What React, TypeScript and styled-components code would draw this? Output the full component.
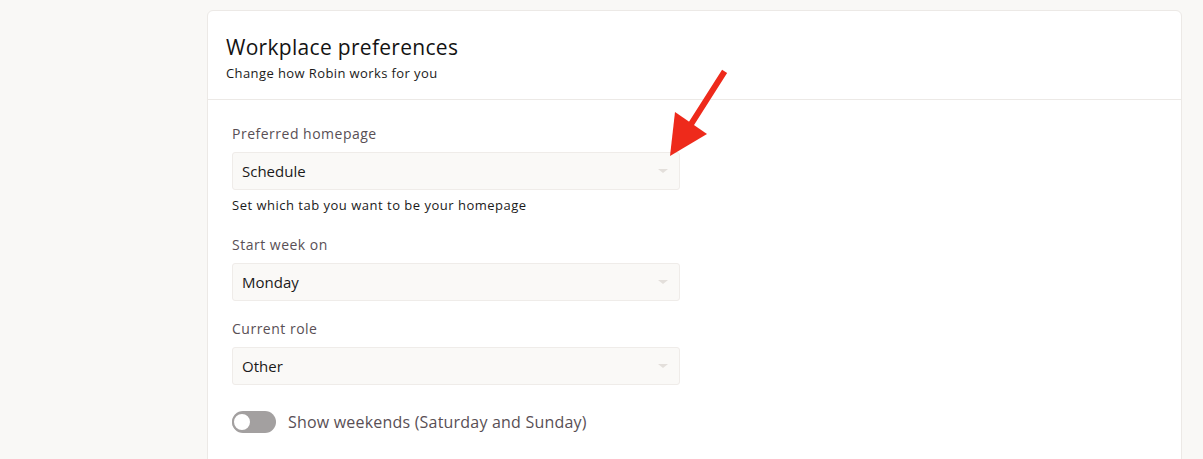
import styled, { createGlobalStyle } from "styled-components";

const GlobalStyle = createGlobalStyle`
  html, body {
    margin: 0;
    padding: 0;
    background: #f9f8f6;
    font-family: "Open Sans", "Noto Sans", sans-serif;
    -webkit-font-smoothing: antialiased;
  }
`;

const Page = styled.div`
  position: relative;
  width: 1203px;
  height: 459px;
  overflow: hidden;
  box-sizing: border-box;
  padding: 10px 21px 0 207px;
`;

const Card = styled.div`
  background: #ffffff;
  border: 1px solid #ece9e6;
  border-radius: 6px;
  height: 480px;
  box-sizing: border-box;
`;

const Header = styled.div`
  padding: 22px 18px 17px 18px;
  border-bottom: 1px solid #ece9e6;
`;

const Title = styled.h1`
  margin: 0;
  font-size: 21px;
  font-weight: 400;
  line-height: 28px;
  letter-spacing: 0.3px;
  color: #141313;
`;

const Subtitle = styled.div`
  margin-top: 3px;
  font-size: 13px;
  line-height: 18px;
  letter-spacing: 0.4px;
  color: #1b1a1a;
`;

const Body = styled.div`
  padding: 24px 24px;
  display: flex;
  flex-direction: column;
`;

const Field = styled.div`
  display: flex;
  flex-direction: column;
  width: 448px;
  margin-bottom: 18px;
`;

const Label = styled.label`
  font-size: 14px;
  line-height: 20px;
  letter-spacing: 0.5px;
  color: #594f55;
  margin-bottom: 8px;
`;

const Select = styled.div`
  position: relative;
  height: 38px;
  box-sizing: border-box;
  background: #faf9f7;
  border: 1px solid #efece9;
  border-radius: 3px;
  display: flex;
  align-items: center;
  padding: 0 9px;
  font-size: 15px;
  color: #1b1a1a;
`;

const Caret = styled.span`
  margin-left: auto;
  margin-right: 2px;
  width: 0;
  height: 0;
  border-left: 5px solid transparent;
  border-right: 5px solid transparent;
  border-top: 4px solid #e3dfdb;
`;

const Help = styled.div`
  margin-top: 6px;
  margin-bottom: 3px;
  font-size: 13px;
  line-height: 18px;
  letter-spacing: 0.5px;
  color: #1b1a1a;
`;

const ToggleRow = styled.div`
  display: flex;
  align-items: center;
  gap: 12px;
  margin-top: 8px;
`;

const Track = styled.div<{ $on?: boolean }>`
  width: 44px;
  height: 22px;
  border-radius: 11px;
  background: ${(p) => (p.$on ? "#3b8c5a" : "#a3a0a0")};
  display: flex;
  align-items: center;
  justify-content: ${(p) => (p.$on ? "flex-end" : "flex-start")};
  box-sizing: border-box;
`;

const Knob = styled.div`
  width: 20px;
  height: 20px;
  border-radius: 50%;
  background: #ffffff;
  border: 2px solid #a3a0a0;
  box-sizing: border-box;
`;

const ToggleLabel = styled.span`
  font-size: 16px;
  letter-spacing: 0.2px;
  color: #594f55;
`;

const Annotation = styled.svg`
  position: absolute;
  left: 0;
  top: 0;
  pointer-events: none;
`;

const fields = [
  { label: "Preferred homepage", value: "Schedule", help: "Set which tab you want to be your homepage" },
  { label: "Start week on", value: "Monday" },
  { label: "Current role", value: "Other" },
];

export default function App() {
  return (
    <>
      <GlobalStyle />
      <Page>
        <Card>
          <Header>
            <Title>Workplace preferences</Title>
            <Subtitle>Change how Robin works for you</Subtitle>
          </Header>
          <Body>
            {fields.map((f) => (
              <Field key={f.label}>
                <Label>{f.label}</Label>
                <Select>
                  {f.value}
                  <Caret />
                </Select>
                {f.help && <Help>{f.help}</Help>}
              </Field>
            ))}
            <ToggleRow>
              <Track>
                <Knob />
              </Track>
              <ToggleLabel>Show weekends (Saturday and Sunday)</ToggleLabel>
            </ToggleRow>
          </Body>
        </Card>
        <Annotation width="1203" height="459" viewBox="0 0 1203 459">
          <line x1="723" y1="74" x2="686" y2="132" stroke="#ee2a1b" strokeWidth="6" strokeLinecap="square" />
          <polygon points="670,156 675,112 707,134" fill="#ee2a1b" />
        </Annotation>
      </Page>
    </>
  );
}
